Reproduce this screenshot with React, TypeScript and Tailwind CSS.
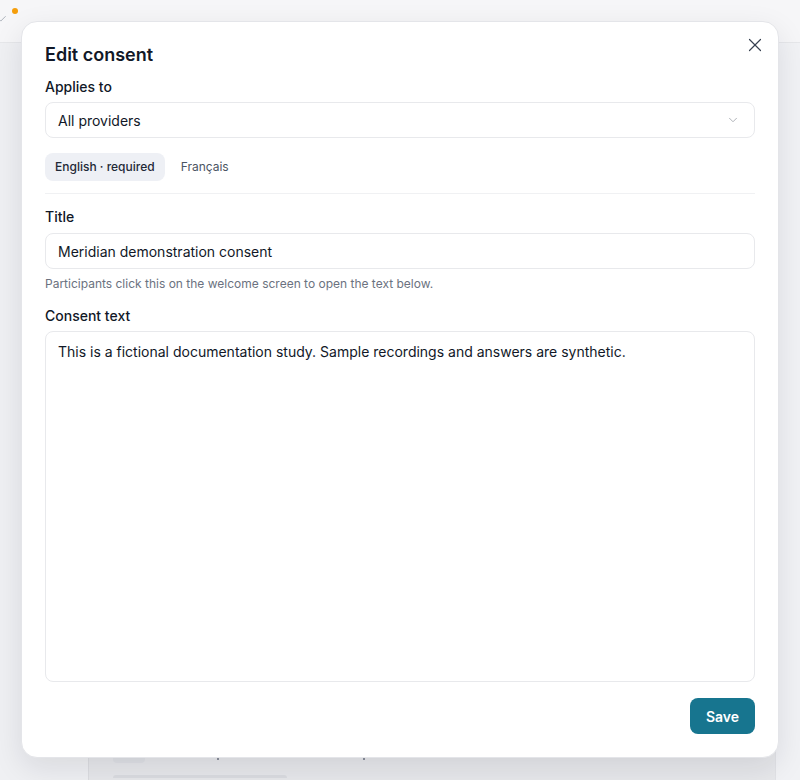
import { ChevronDown, X, Check } from 'lucide-react';

const fontStack = { fontFamily: 'Inter, "Noto Sans", sans-serif' };

function Backdrop() {
  return (
    <div className="flex h-[780px] w-[800px] flex-col bg-[#eceef1]">
      {/* Top bar */}
      <div className="flex h-[43px] shrink-0 items-start border-b border-[#e6e7ea] bg-[#f6f6f8]">
        <Check size={10} strokeWidth={2} className="-ml-[3px] mt-[14px] text-[#9ca3af]" />
        <span className="mt-[8px] ml-[5px] h-[6px] w-[6px] rounded-full bg-[#f59e0b]" />
      </div>
      <div className="flex flex-1">
        <div className="w-[89px] shrink-0 border-r border-[#dcdde1] bg-[#eff0f3]" />
        <div className="flex flex-1 flex-col justify-end bg-[#e7e8eb] pb-[2px] pl-[24px]">
          <div className="mb-[12px] flex items-center gap-[72px]">
            <span className="h-[8px] w-[32px] rounded-full bg-[#dfe1e6]" />
            <span className="h-[2px] w-[2px] rounded-full bg-[#6b7280]" />
            <span className="ml-[72px] h-[2px] w-[2px] rounded-full bg-[#6b7280]" />
          </div>
          <div className="h-[3px] w-[174px] rounded-t bg-[#dadce0]" />
        </div>
        <div className="w-[25px] shrink-0 border-l border-[#e1e2e6] bg-[#f1f2f5]" />
      </div>
    </div>
  );
}

function Label({ children }: { children: React.ReactNode }) {
  return <div className="text-[14px] font-medium leading-5 text-[#111827]">{children}</div>;
}

export default function App() {
  return (
    <div className="relative h-[780px] w-[800px] overflow-hidden" style={fontStack}>
      <Backdrop />

      {/* Modal */}
      <div className="absolute left-[21px] top-[21px] flex h-[737px] w-[758px] flex-col rounded-[16px] border border-[#e4e5e9] bg-white px-[23px] pt-[24px] pb-[23px] shadow-[0_10px_30px_rgba(15,23,42,0.10)]">
        <button className="absolute right-[12px] top-[12px] flex h-[22px] w-[22px] items-center justify-center text-[#374151]">
          <X size={22} strokeWidth={1.3} />
        </button>

        <h2 className="text-[18px] font-semibold leading-[18px] text-[#111827]">Edit consent</h2>

        <div className="mt-[13px]">
          <Label>Applies to</Label>
        </div>
        <div className="mt-[5px] flex h-[36px] items-center justify-between rounded-[8px] border border-[#e8e9ec] px-[12px]">
          <span className="text-[14px] text-[#111827]">All providers</span>
          <ChevronDown size={14} strokeWidth={1.5} className="mr-[2px] text-[#a3a7ae]" />
        </div>

        {/* Language tabs */}
        <div className="mt-[15px] flex items-center gap-[6px]">
          <button className="h-[28px] rounded-[8px] bg-[#eef0f5] px-[10px] text-[12px] font-medium text-[#1f2937]">
            English · required
          </button>
          <button className="h-[28px] rounded-[8px] px-[10px] text-[12px] text-[#4b5563]">Français</button>
        </div>
        <div className="mt-[12px] border-t border-[#f0f1f3]" />

        <div className="mt-[13px]">
          <Label>Title</Label>
        </div>
        <div className="mt-[6px] flex h-[36px] items-center rounded-[8px] border border-[#e8e9ec] px-[12px] text-[14px] text-[#111827]">
          Meridian demonstration consent
        </div>
        <p className="mt-[7px] text-[12px] leading-4 text-[#6b7280]">
          Participants click this on the welcome screen to open the text below.
        </p>

        <div className="mt-[14px]">
          <Label>Consent text</Label>
        </div>
        <div className="mt-[5px] h-[351px] rounded-[8px] border border-[#e8e9ec] px-[12px] py-[10px] text-[14px] leading-[20px] text-[#111827]">
          This is a fictional documentation study. Sample recordings and answers are synthetic.
        </div>

        <div className="mt-[16px] flex justify-end">
          <button className="h-[36px] w-[65px] rounded-[8px] bg-[#17758f] text-[14px] font-semibold text-white">
            Save
          </button>
        </div>
      </div>
    </div>
  );
}
